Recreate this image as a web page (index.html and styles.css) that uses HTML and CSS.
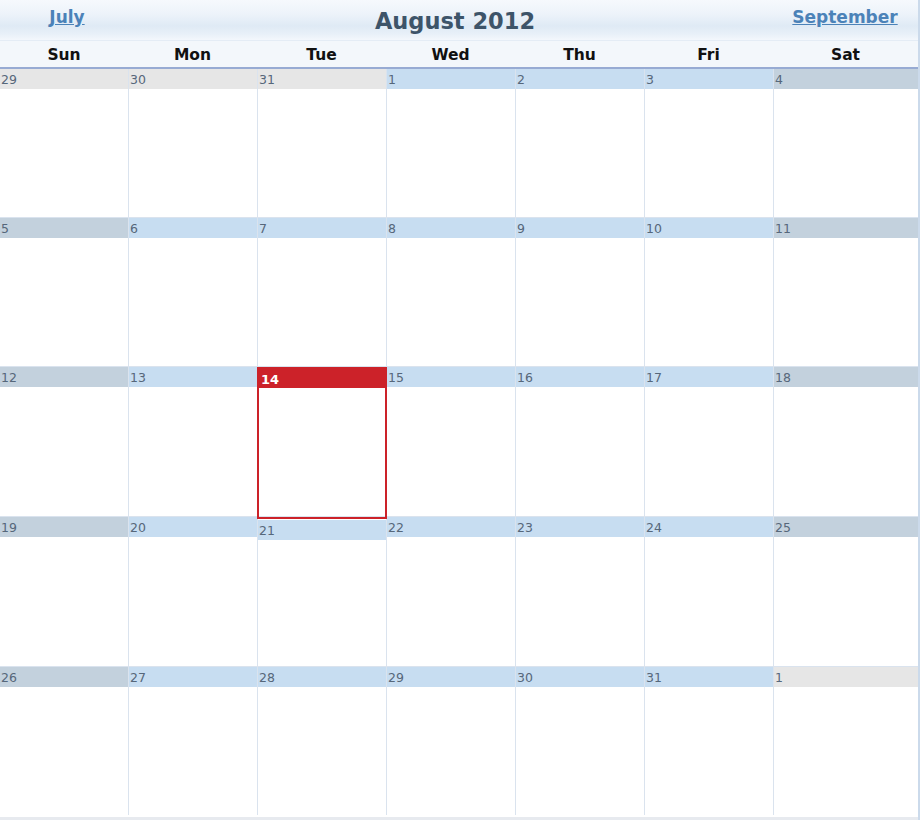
FILE: index.html
```html
<!DOCTYPE html>
<html>
<head>
<meta charset="utf-8">
<link rel="stylesheet" href="styles.css">
</head>
<body>
<div class="cal">
  <div class="titlebar">
    <div class="nav nav-left"><a href="#">July</a></div>
    <div class="title">August 2012</div>
    <div class="nav nav-right"><a href="#">September</a></div>
  </div>
  <div class="days">
    <div>Sun</div><div>Mon</div><div>Tue</div><div>Wed</div><div>Thu</div><div>Fri</div><div>Sat</div>
  </div>
  <div class="grid">
    <div class="cell other"><div class="num">29</div></div>
    <div class="cell other"><div class="num">30</div></div>
    <div class="cell other"><div class="num">31</div></div>
    <div class="cell"><div class="num">1</div></div>
    <div class="cell"><div class="num">2</div></div>
    <div class="cell"><div class="num">3</div></div>
    <div class="cell weekend"><div class="num">4</div></div>

    <div class="cell weekend"><div class="num">5</div></div>
    <div class="cell"><div class="num">6</div></div>
    <div class="cell"><div class="num">7</div></div>
    <div class="cell"><div class="num">8</div></div>
    <div class="cell"><div class="num">9</div></div>
    <div class="cell"><div class="num">10</div></div>
    <div class="cell weekend"><div class="num">11</div></div>

    <div class="cell weekend"><div class="num">12</div></div>
    <div class="cell"><div class="num">13</div></div>
    <div class="cell today"><div class="num">14</div></div>
    <div class="cell"><div class="num">15</div></div>
    <div class="cell"><div class="num">16</div></div>
    <div class="cell"><div class="num">17</div></div>
    <div class="cell weekend"><div class="num">18</div></div>

    <div class="cell weekend"><div class="num">19</div></div>
    <div class="cell"><div class="num">20</div></div>
    <div class="cell after-today"><div class="num">21</div></div>
    <div class="cell"><div class="num">22</div></div>
    <div class="cell"><div class="num">23</div></div>
    <div class="cell"><div class="num">24</div></div>
    <div class="cell weekend"><div class="num">25</div></div>

    <div class="cell weekend"><div class="num">26</div></div>
    <div class="cell"><div class="num">27</div></div>
    <div class="cell"><div class="num">28</div></div>
    <div class="cell"><div class="num">29</div></div>
    <div class="cell"><div class="num">30</div></div>
    <div class="cell"><div class="num">31</div></div>
    <div class="cell other"><div class="num">1</div></div>
  </div>
  <div class="footer"></div>
</div>
</body>
</html>
```

FILE: styles.css
```css
html, body {
  margin: 0;
  padding: 0;
  background: #ffffff;
}
.cal {
  width: 918px;
  height: 820px;
  border-right: 2px solid #cbdaeb;
  font-family: "DejaVu Sans", Verdana, sans-serif;
  display: flex;
  flex-direction: column;
  overflow: hidden;
}
.titlebar {
  height: 40px;
  flex-shrink: 0;
  display: flex;
  align-items: center;
  background: linear-gradient(to bottom, #f6f9fd 0%, #edf3fa 35%, #dfeaf5 65%, #e8f0f8 85%, #f3f7fc 100%);
  border-bottom: 1px solid #e4ecf5;
}
.nav {
  display: flex;
  justify-content: center;
  align-self: flex-start;
  padding-top: 7px;
}
.nav-left { width: 134px; }
.nav-right { width: 146px; margin-left: auto; }
.nav a {
  color: #4b82b8;
  font-weight: bold;
  font-size: 17px;
  text-decoration: underline;
}
.title {
  flex: 1;
  text-align: center;
  font-size: 22.5px;
  font-weight: bold;
  color: #3d5469;
  padding-left: 4px;
  padding-top: 1px;
}
.days {
  height: 26px;
  flex-shrink: 0;
  display: grid;
  grid-template-columns: 128px repeat(5, 129px) 1fr;
  background: #f3f7fb;
  border-bottom: 2px solid #97abd3;
  font-weight: bold;
  font-size: 15.5px;
  color: #111111;
}
.days div {
  text-align: center;
  line-height: 28px;
}
.grid {
  flex-shrink: 0;
  display: grid;
  grid-template-columns: 128px repeat(5, 128px) 1fr;
  grid-template-rows: 148px 148px 149px 149px 148px;
  column-gap: 1px;
  row-gap: 1px;
  background: #dae3ee;
}
.cell {
  background: #ffffff;
  position: relative;
}
.num {
  height: 20px;
  line-height: 22px;
  padding-left: 1px;
  font-size: 12.5px;
  color: #56677a;
  background: #c7ddf1;
  overflow: hidden;
}
.cell.other .num { background: #e6e6e6; }
.cell.weekend .num { background: #c3d1dd; }
.cell.today {
  z-index: 2;
}
.cell.today::after {
  content: "";
  position: absolute;
  left: -1px;
  top: 0;
  right: -1px;
  bottom: -3px;
  border: 2px solid #cc2229;
  pointer-events: none;
}
.cell.today .num {
  background: #cc2229;
  color: #ffffff;
  font-weight: bold;
  font-size: 13px;
  padding-left: 3px;
  height: 21px;
  line-height: 25px;
}
.cell.after-today .num {
  margin-top: 3px;
}
.footer {
  flex: 1;
  background: #e7eaef;
  margin-top: 2px;
}
```
